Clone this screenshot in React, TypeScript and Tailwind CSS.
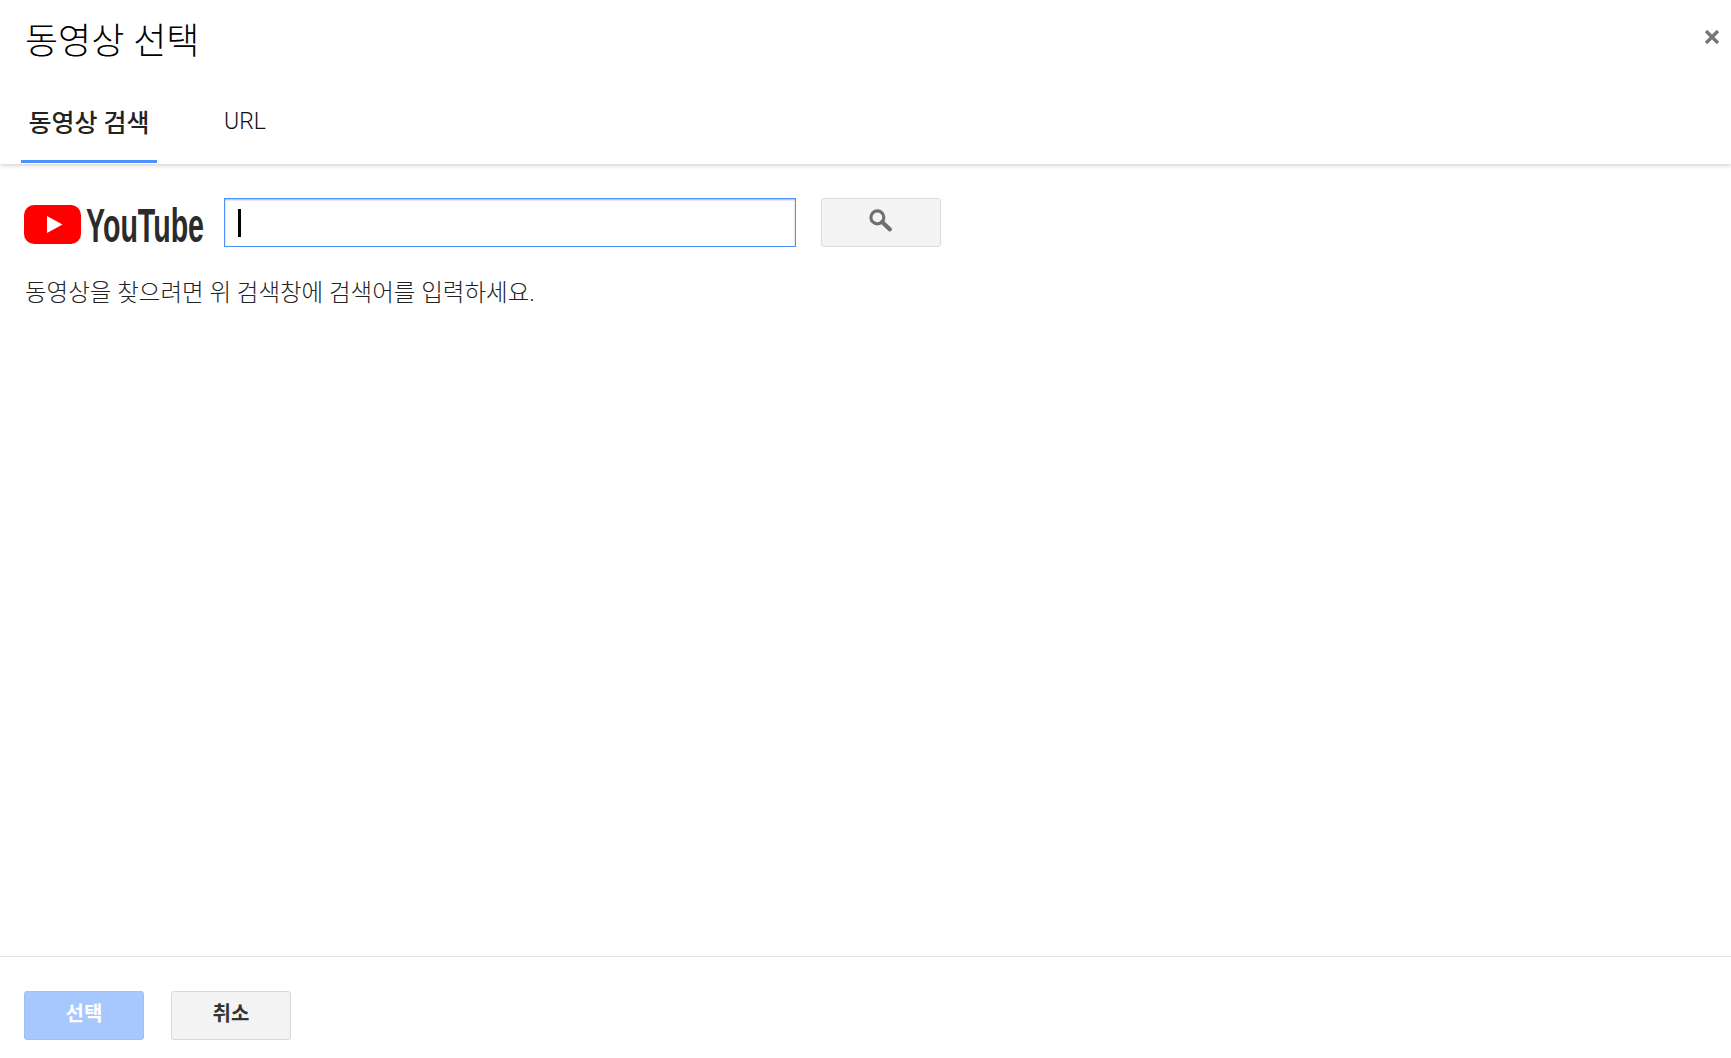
const KR = "font-['Roboto','Noto_Sans_CJK_KR',sans-serif]";

function YoutubeLogo() {
  return (
    <svg width="182" height="44" viewBox="0 0 182 44" className="block overflow-visible">
      <rect x="0" y="2" width="57" height="39" rx="10" fill="#ff0000" />
      <path d="M23 13 L38.5 21.5 L23 30 Z" fill="#fff" />
      <text
        x="62"
        y="38.5"
        textLength="118"
        lengthAdjust="spacingAndGlyphs"
        fontFamily="'Liberation Sans', sans-serif"
        fontWeight="700"
        fontSize="48"
        fill="#2b2b2b"
      >
        YouTube
      </text>
    </svg>
  );
}

export default function App() {
  return (
    <div className={`${KR} flex h-[1058px] w-full flex-col overflow-hidden bg-white`}>
      {/* Header */}
      <div className="flex h-[78px] items-start justify-between pl-[25px] pr-[11px]">
        <h1 className="mt-[19px] text-[36px] leading-[46px] font-light text-black">동영상 선택</h1>
        <svg width="16" height="16" viewBox="0 0 16 16" className="mt-[29px]">
          <path d="M2 2 L14 14 M14 2 L2 14" stroke="#777" strokeWidth="3.4" />
        </svg>
      </div>

      {/* Tabs */}
      <div className="relative z-10 flex h-[86px] items-end gap-[67px] pl-[21px] shadow-[0_1px_5px_rgba(0,0,0,0.22)] [clip-path:inset(0_0_-10px_0)]">
        <div className="mb-[1px] flex h-[84px] w-[136px] items-center justify-center border-b-[3px] border-[#4d90fe] pt-[8px] text-[25px] font-medium text-[#222]">
          동영상 검색
        </div>
        <div className="mb-[1px] flex h-[84px] items-center pt-[2px] text-[23px] font-light text-[#111]">URL</div>
      </div>

      {/* Search */}
      <div className="flex-1 pl-6 pt-[34px]">
        <div className="flex items-start">
          <div className="mt-[5px] w-[200px]">
            <YoutubeLogo />
          </div>
          <div className="flex h-[49px] w-[572px] items-center border border-[#4d90fe] pl-[13px] shadow-[inset_0_1px_2px_rgba(0,0,0,0.3)]">
            <span className="h-[28px] w-[3px] bg-black" />
          </div>
          <button className="ml-[25px] flex h-[49px] w-[120px] items-center justify-center rounded-[3px] border border-[#dcdcdc] bg-[#f4f4f4]">
            <svg width="25" height="25" viewBox="0 0 24 24" className="mr-[2px] mb-[4px]">
              <circle cx="9" cy="9" r="6.2" fill="none" stroke="#707070" strokeWidth="3" />
              <path d="M13.5 13.5 L21 20.5" stroke="#707070" strokeWidth="4" strokeLinecap="round" />
            </svg>
          </button>
        </div>
        <p className="mt-[29px] pl-[1px] text-[23.5px] leading-[34px] font-light text-[#222]">동영상을 찾으려면 위 검색창에 검색어를 입력하세요.</p>
      </div>

      {/* Footer */}
      <div className="flex h-[102px] items-start gap-[27px] border-t border-[#e5e5e5] pl-6 pt-[34px]">
        <button className="h-[49px] w-[120px] rounded-[3px] border border-[#a0c0f5] bg-[#a6c8ff] pb-[4px] text-[20px] font-bold text-white">
          선택
        </button>
        <button className="h-[49px] w-[120px] rounded-[3px] border border-[#d9d9d9] bg-[#f3f3f3] pb-[4px] text-[20px] font-bold text-[#333]">
          취소
        </button>
      </div>
    </div>
  );
}
